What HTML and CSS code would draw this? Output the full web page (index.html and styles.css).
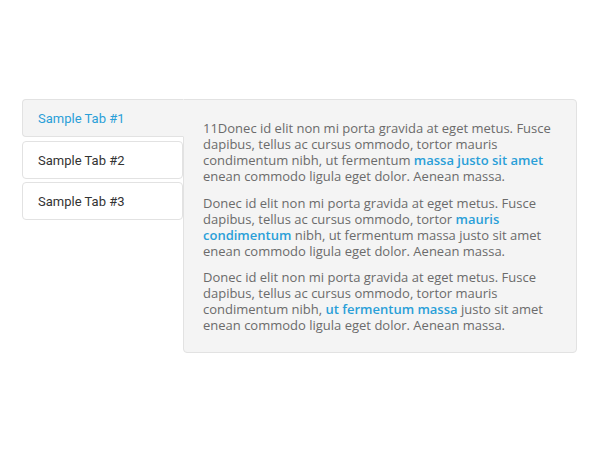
FILE: index.html
```html
<!DOCTYPE html>
<html>
<head>
<meta charset="utf-8">
<link rel="stylesheet" href="styles.css">
</head>
<body>
<div class="tabs">
  <ul class="tab-list">
    <li class="tab active">Sample Tab #1</li>
    <li class="tab">Sample Tab #2</li>
    <li class="tab">Sample Tab #3</li>
  </ul>
  <div class="panel">
    <p>11Donec id elit non mi porta gravida at eget metus. Fusce dapibus, tellus ac cursus ommodo, tortor mauris condimentum nibh, ut fermentum <b class="hl">massa justo sit amet</b> enean commodo ligula eget dolor. Aenean massa.</p>
    <p>Donec id elit non mi porta gravida at eget metus. Fusce dapibus, tellus ac cursus ommodo, tortor <b class="hl">mauris condimentum</b> nibh, ut fermentum massa justo sit amet enean commodo ligula eget dolor. Aenean massa.</p>
    <p>Donec id elit non mi porta gravida at eget metus. Fusce dapibus, tellus ac cursus ommodo, tortor mauris condimentum nibh, <b class="hl">ut fermentum massa</b> justo sit amet enean commodo ligula eget dolor. Aenean massa.</p>
  </div>
</div>
</body>
</html>
```
FILE: styles.css
```css
html, body {
  margin: 0;
  padding: 0;
  background: #fff;
}
.tabs {
  display: flex;
  align-items: flex-start;
  margin: 99px 0 0 22px;
  width: 555px;
}
.tab-list {
  list-style: none;
  margin: 0;
  padding: 0;
  width: 162px;
  flex: none;
  position: relative;
  z-index: 1;
  margin-right: -1px;
}
.tab {
  box-sizing: border-box;
  height: 38px;
  margin-bottom: 3.5px;
  padding: 0 15px;
  display: flex;
  align-items: center;
  font-family: Roboto, "Liberation Sans", sans-serif;
  font-size: 13px;
  color: #333;
  background: #fff;
  border: 1px solid #e2e2e2;
  border-radius: 4px;
  margin-right: 1px;
}
.tab + .tab {
  padding-top: 1px;
}
.tab.active {
  color: #2a9fd8;
  background: #f4f4f4;
  border-color: #e2e2e2;
  border-right-color: #f4f4f4;
  border-radius: 4px 0 0 4px;
  margin-right: 0;
}
.panel {
  flex: 1;
  box-sizing: border-box;
  background: #f4f4f4;
  border: 1px solid #e2e2e2;
  border-radius: 0 4px 4px 4px;
  padding: 20px 20px 19px 19px;
  font-family: "Open Sans", "Liberation Sans", sans-serif;
  font-size: 13px;
  line-height: 16px;
  color: #6b6b6b;
}
.panel p {
  margin: 0 0 10.5px;
}
.panel p:last-child {
  margin-bottom: 0;
}
.hl {
  color: #2a9fd8;
  font-weight: 600;
}
```
